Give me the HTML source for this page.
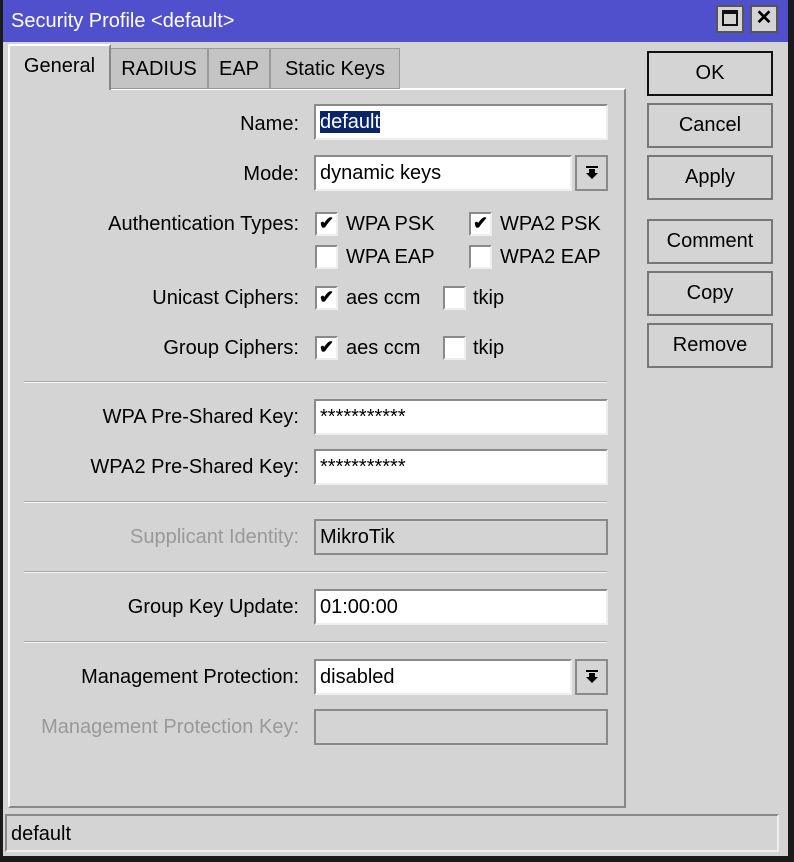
<!DOCTYPE html>
<html><head><meta charset="utf-8"><style>
*{box-sizing:border-box;margin:0;padding:0}
body{width:794px;height:862px;background:#1a1a1a;font-family:"Liberation Sans",sans-serif;font-size:20px;color:#000;position:relative;overflow:hidden}
.win{position:absolute;left:3px;top:0;width:785px;height:856px;background:#d4d4d4}
.title{position:absolute;left:0;top:0;width:785px;height:42px;background:#5050cc;color:#fff;font-size:20px;line-height:42px;padding-left:8px}
.tb{position:absolute;top:5px;width:28px;height:28px;background:#d4d4d4;border:2px solid #555}
.a{position:absolute}
.lbl{position:absolute;right:489px;text-align:right;white-space:nowrap;height:32px;line-height:32px}
.dis{color:#999}
.inp{position:absolute;left:311px;width:294px;height:36px;background:#fff;border:2px solid #8a8a8a;border-right-color:#eee;border-bottom-color:#eee;line-height:32px;padding-left:4px;white-space:nowrap}
.inp.g{background:#d4d4d4;border-color:#8a8a8a}
.cmb{width:258px}
.dd{position:absolute;left:572px;width:33px;height:36px;border:2px solid #8a8a8a;background:#d4d4d4}
.dd svg{position:absolute;left:8px;top:9px}
.cb{position:absolute;width:23px;height:24px;background:#fff;border:2px solid #8a8a8a;border-right-color:#eee;border-bottom-color:#eee;font-size:18px;line-height:19px;text-align:center;font-weight:bold}
.ct{position:absolute;line-height:24px;white-space:nowrap}
.sep{position:absolute;left:21px;width:583px;height:2px;border-top:1px solid #aaa;border-bottom:1px solid #f4f4f4}
.btn{position:absolute;left:644px;width:126px;height:45px;border:2px solid #777;text-align:center;line-height:41px;background:#d4d4d4}
.tab{position:absolute;top:48px;height:41px;border:1px solid #999;background:#c4c4c4;text-align:center;line-height:40px}
</style></head><body>
<div class="win">
<div class="title">Security Profile &lt;default&gt;</div>
<div class="tb" style="left:713px"><div style="position:absolute;left:4px;top:3px;width:16px;height:16px;border:2px solid #111;border-top-width:4px"></div></div>
<div class="tb" style="left:747px;text-align:center;line-height:22px;font-weight:bold;font-size:20px">✕</div>

<div class="a" style="left:5px;top:88px;width:618px;height:720px;border:2px solid #888;border-top-color:#fff;border-left-color:#fff;border-top:2px solid #fff"></div>
<div class="tab" style="left:107px;width:98px">RADIUS</div>
<div class="tab" style="left:205px;width:62px">EAP</div>
<div class="tab" style="left:267px;width:130px">Static Keys</div>
<div class="a" style="left:5px;top:44px;width:103px;height:46px;background:#d4d4d4;border:2px solid #fff;border-bottom:none;border-right-color:#888;text-align:center;line-height:40px">General</div>

<div class="lbl" style="top:108px">Name:</div>
<div class="inp" style="top:104px"><span style="background:#0a246a;color:#fff">default</span></div>
<div class="lbl" style="top:158px">Mode:</div>
<div class="inp cmb" style="top:155px">dynamic keys</div><div class="dd" style="top:155px"><svg width="14" height="14" viewBox="0 0 14 14"><rect x="1" y="0" width="12" height="2" fill="#000"/><path d="M4 3h6v4h3l-6 6-6-6h3z" fill="#000"/></svg></div>
<div class="lbl" style="top:208px">Authentication Types:</div>
<div class="cb" style="left:312px;top:212px">✔</div><div class="ct" style="left:343px;top:212px">WPA PSK</div>
<div class="cb" style="left:466px;top:212px">✔</div><div class="ct" style="left:497px;top:212px">WPA2 PSK</div>
<div class="cb" style="left:312px;top:245px"></div><div class="ct" style="left:343px;top:245px">WPA EAP</div>
<div class="cb" style="left:466px;top:245px"></div><div class="ct" style="left:497px;top:245px">WPA2 EAP</div>
<div class="lbl" style="top:282px">Unicast Ciphers:</div>
<div class="cb" style="left:312px;top:286px">✔</div><div class="ct" style="left:343px;top:286px">aes ccm</div>
<div class="cb" style="left:440px;top:286px"></div><div class="ct" style="left:470px;top:286px">tkip</div>
<div class="lbl" style="top:332px">Group Ciphers:</div>
<div class="cb" style="left:312px;top:336px">✔</div><div class="ct" style="left:343px;top:336px">aes ccm</div>
<div class="cb" style="left:440px;top:336px"></div><div class="ct" style="left:470px;top:336px">tkip</div>
<div class="sep" style="top:381px"></div>
<div class="lbl" style="top:401px">WPA Pre-Shared Key:</div>
<div class="inp" style="top:399px">***********</div>
<div class="lbl" style="top:451px">WPA2 Pre-Shared Key:</div>
<div class="inp" style="top:449px">***********</div>
<div class="sep" style="top:501px"></div>
<div class="lbl dis" style="top:521px">Supplicant Identity:</div>
<div class="inp g" style="top:519px">MikroTik</div>
<div class="sep" style="top:571px"></div>
<div class="lbl" style="top:591px">Group Key Update:</div>
<div class="inp" style="top:589px">01:00:00</div>
<div class="sep" style="top:641px"></div>
<div class="lbl" style="top:661px">Management Protection:</div>
<div class="inp cmb" style="top:659px">disabled</div><div class="dd" style="top:659px"><svg width="14" height="14" viewBox="0 0 14 14"><rect x="1" y="0" width="12" height="2" fill="#000"/><path d="M4 3h6v4h3l-6 6-6-6h3z" fill="#000"/></svg></div>
<div class="lbl dis" style="top:711px">Management Protection Key:</div>
<div class="inp g" style="top:709px"></div>

<div class="btn" style="top:51px;border-color:#111">OK</div>
<div class="btn" style="top:103px">Cancel</div>
<div class="btn" style="top:155px">Apply</div>
<div class="btn" style="top:219px">Comment</div>
<div class="btn" style="top:271px">Copy</div>
<div class="btn" style="top:323px">Remove</div>

<div class="a" style="left:2px;top:814px;width:774px;height:38px;border:2px solid #888;border-right-color:#eee;border-bottom-color:#eee;line-height:36px;padding-left:4px">default</div>
</div>
</body></html>
